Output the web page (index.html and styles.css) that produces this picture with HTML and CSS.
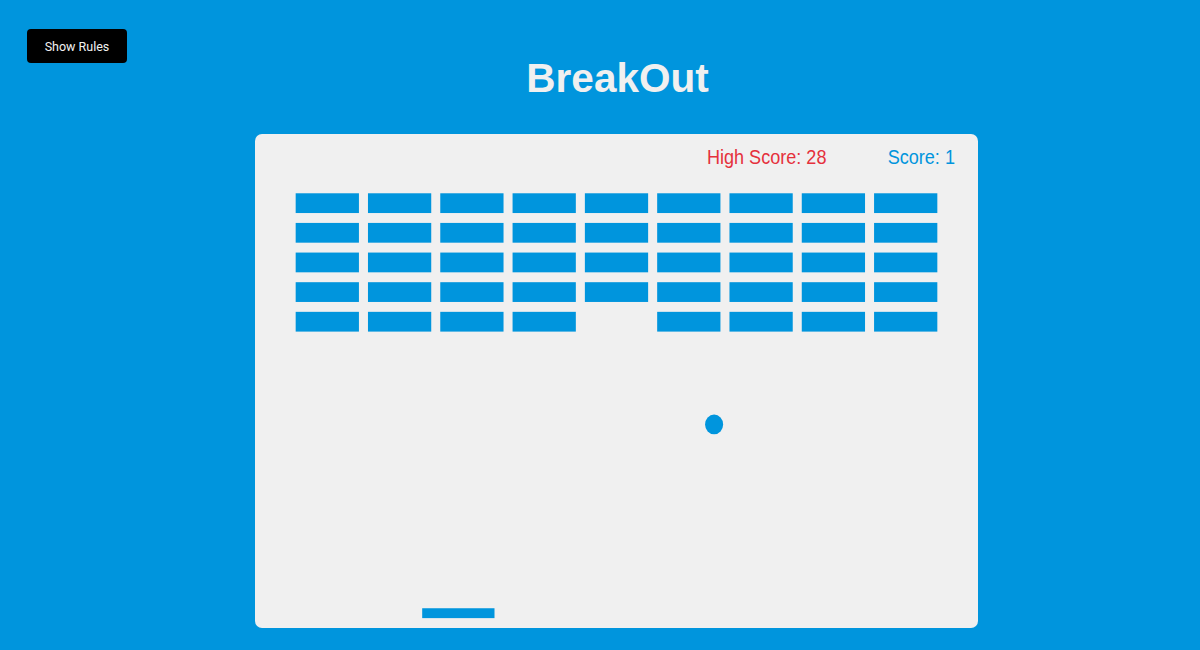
FILE: index.html
```html
<!DOCTYPE html>
<html lang="en">
<head>
<meta charset="utf-8">
<title>BreakOut</title>
<link rel="stylesheet" href="styles.css">
</head>
<body>
<button class="btn rules-btn">Show Rules</button>
<main class="game">
  <h1 class="title">BreakOut</h1>
  <div class="canvas">
    <div class="board">
      <div class="high-score">High Score: 28</div>
      <div class="score">Score: 1</div>
      <div class="bricks">
        <div class="brick"></div><div class="brick"></div><div class="brick"></div><div class="brick"></div><div class="brick"></div><div class="brick"></div><div class="brick"></div><div class="brick"></div><div class="brick"></div>
        <div class="brick"></div><div class="brick"></div><div class="brick"></div><div class="brick"></div><div class="brick"></div><div class="brick"></div><div class="brick"></div><div class="brick"></div><div class="brick"></div>
        <div class="brick"></div><div class="brick"></div><div class="brick"></div><div class="brick"></div><div class="brick"></div><div class="brick"></div><div class="brick"></div><div class="brick"></div><div class="brick"></div>
        <div class="brick"></div><div class="brick"></div><div class="brick"></div><div class="brick"></div><div class="brick"></div><div class="brick"></div><div class="brick"></div><div class="brick"></div><div class="brick"></div>
        <div class="brick"></div><div class="brick"></div><div class="brick"></div><div class="brick"></div><div class="brick brick-gone"></div><div class="brick"></div><div class="brick"></div><div class="brick"></div><div class="brick"></div>
      </div>
      <div class="ball"></div>
      <div class="paddle"></div>
    </div>
  </div>
</main>
</body>
</html>
```

FILE: styles.css
```css
* {
  box-sizing: border-box;
}

html, body {
  margin: 0;
  height: 100%;
}

body {
  background: #0095dd;
  font-family: "Liberation Sans", Arial, Helvetica, sans-serif;
  overflow: hidden;
}

.btn {
  cursor: pointer;
  border: 0;
  background: #000;
  color: #f2f2f2;
  border-radius: 4px;
  font-family: Roboto, "Liberation Sans", Arial, sans-serif;
  font-size: 12.5px;
  padding: 0;
}

.rules-btn {
  position: absolute;
  top: 29px;
  left: 27px;
  width: 100px;
  height: 34px;
}

.game {
  display: flex;
  flex-direction: column;
  align-items: center;
  padding-top: 58px;
  padding-left: 33px;
}

.title {
  margin: 0 0 35px;
  font-size: 40.5px;
  line-height: 41px;
  font-weight: bold;
  color: #f0f0f0;
  padding-left: 2px;
}

.canvas {
  width: 723px;
  height: 494px;
  background: #f0f0f0;
  border-radius: 7px;
  overflow: hidden;
}

.board {
  position: relative;
  width: 800px;
  height: 500px;
  transform: scale(0.90375, 0.988);
  transform-origin: 0 0;
}

.high-score,
.score {
  position: absolute;
  top: 13px;
  font-size: 20px;
  line-height: 20px;
  white-space: nowrap;
}

.high-score {
  left: 500px;
  color: #e5303c;
}

.score {
  left: 700px;
  color: #0095dd;
}

.bricks {
  display: grid;
  grid-template-columns: repeat(9, 70px);
  grid-auto-rows: 20px;
  column-gap: 10px;
  row-gap: 10px;
  padding: 60px 0 0 45px;
}

.brick {
  background: #0095dd;
}

.brick-gone {
  visibility: hidden;
}

.ball {
  position: absolute;
  left: 498px;
  top: 284px;
  width: 20px;
  height: 20px;
  border-radius: 50%;
  background: #0095dd;
}

.paddle {
  position: absolute;
  left: 185px;
  top: 480px;
  width: 80px;
  height: 10px;
  background: #0095dd;
}
```
